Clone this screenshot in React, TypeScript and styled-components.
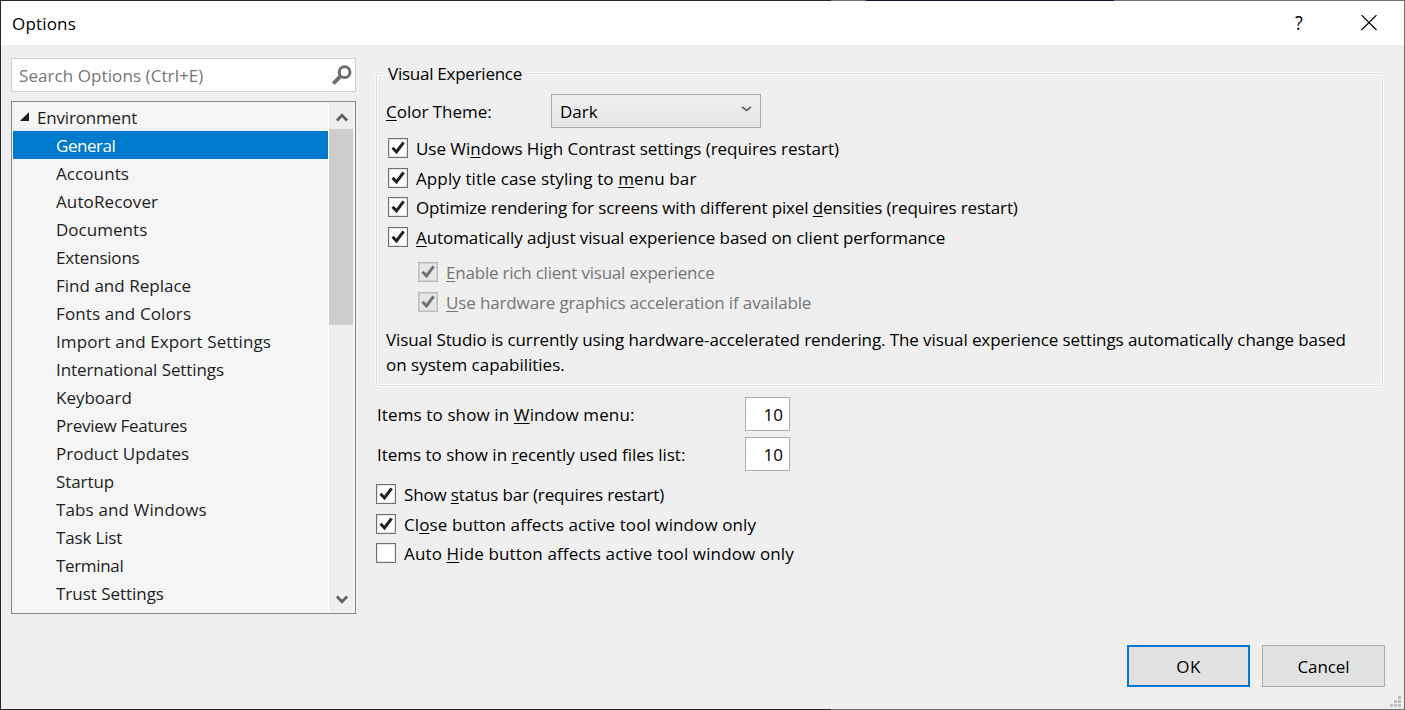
import React from "react";
import styled, { createGlobalStyle, css } from "styled-components";

const GlobalStyle = createGlobalStyle`
  *, *::before, *::after { box-sizing: border-box; }
  body {
    margin: 0;
    font-family: "Open Sans", "Segoe UI", sans-serif;
    font-size: 17px;
    line-height: 20px;
    color: #000;
  }
  svg { display: block; }
`;

const Frame = styled.div`
  width: 1405px;
  height: 710px;
  padding: 1px;
  background:
    linear-gradient(90deg, #2a2224 831px, #6f6d6e 831px 866px, #14123a 866px 1114px, #6f6d6e 1114px) top / 100% 1px no-repeat,
    linear-gradient(90deg, #2a2628 831px, #6f6d6e 831px) bottom / 100% 1px no-repeat,
    linear-gradient(90deg, #2a2426 50%, #6b6b6b 50%);
`;

const Dialog = styled.div`
  display: flex;
  flex-direction: column;
  height: 708px;
  background: #efefef;
`;

const TitleBar = styled.header`
  display: flex;
  align-items: center;
  height: 44px;
  padding: 0 27px 0 11px;
  background: #fff;
`;

const Caption = styled.div`
  flex: 1;
  padding-top: 2px;
`;

const HelpMark = styled.span`
  width: 12px;
  margin-right: 56px;
  font-size: 20px;
  text-align: center;
  transform: scaleX(0.9);
`;

const Main = styled.main`
  display: flex;
  height: 587px;
  padding: 13px 20px 0 10px;
`;

const Sidebar = styled.aside`
  width: 345px;
  margin-right: 19px;
`;

const SearchBox = styled.div`
  display: flex;
  align-items: center;
  justify-content: space-between;
  height: 34px;
  margin-bottom: 9px;
  padding: 2px 3px 0 7px;
  border: 1px solid #ccceDb;
  background: #fff;
  color: #767676;
`;

const SearchIcon = styled.svg`
  margin-bottom: 2px;
`;

const Tree = styled.div`
  display: flex;
  height: 513px;
  padding: 1px;
  border: 1px solid #828790;
  background: #f5f5f5;
`;

const TreeItems = styled.div`
  width: 315px;
`;

const TreeRow = styled.div<{ $root?: boolean; $selected?: boolean }>`
  display: flex;
  align-items: center;
  gap: 8px;
  height: 28px;
  padding-top: 1px;
  padding-left: ${(p) => (p.$root ? 7 : 43)}px;
  background: ${(p) => (p.$selected ? "#007acc" : "transparent")};
  color: ${(p) => (p.$selected ? "#fff" : "#1e1e1e")};

  svg { margin-bottom: 2px; }
`;

const ScrollBar = styled.div`
  display: flex;
  flex-direction: column;
  width: 25px;
  border-left: 1px solid #fff;
  background: #efefef;
`;

const ScrollButton = styled.div`
  display: flex;
  align-items: center;
  justify-content: center;
  height: 26px;
  padding: 3px 0 0 1px;

  &:last-child { padding-top: 1px; }
`;

const ScrollThumb = styled.div`
  height: 196px;
  margin-bottom: auto;
  background: #cdcdcd;
`;

const Page = styled.section`
  width: 1009px;
`;

const Group = styled.fieldset`
  height: 325px;
  margin: 4px 0 0;
  padding: 0 0 0 8px;
  min-width: 0;
  border: 0;
  position: relative;

  &::before {
    content: "";
    position: absolute;
    inset: 11px 1px 1px 1px;
    border: 1px solid #d3dde4;
    border-radius: 4px;
    box-shadow: 0 0 0 1px #fcfcfc, inset 0 0 0 1px #ffffff;
    pointer-events: none;
  }
`;

const GroupTitle = styled.div`
  position: relative;
  width: 142px;
  height: 24px;
  padding-left: 3px;
  margin-left: 2px;
  line-height: 24px;
  background: #efefef;
`;

const ThemeRow = styled.div`
  display: flex;
  align-items: center;
  height: 34px;
  margin: 8px 0 10px;
  padding-left: 3px;
`;

const FieldName = styled.div<{ $width: number }>`
  width: ${(p) => p.$width}px;
  padding-top: 2px;
`;

const Select = styled.div`
  display: flex;
  justify-content: space-between;
  align-items: center;
  width: 210px;
  height: 34px;
  padding: 2px 8px 0;
  border: 1px solid #acacac;
  background: linear-gradient(#f0f0f0, #e5e5e5);
`;

const SelectArrow = styled.svg`
  margin-bottom: 6px;
`;

const CheckList = styled.div<{ $left: number; $top?: number }>`
  display: flex;
  flex-direction: column;
  gap: 9.67px;
  margin-top: ${(p) => p.$top ?? 0}px;
  padding-left: ${(p) => p.$left}px;
`;

const CheckRow = styled.div<{ $disabled?: boolean }>`
  display: flex;
  gap: 8px;
  height: 20px;
  line-height: 22px;
  color: ${(p) => (p.$disabled ? "#767676" : "#000")};
`;

const Box = styled.span<{ $disabled?: boolean }>`
  width: 20px;
  height: 20px;
  border: 1px solid #707070;
  background: #fff;
  box-shadow: inset 0 0 0 1px rgba(112, 112, 112, 0.18);
  ${(p) =>
    p.$disabled &&
    css`
      border-color: #bcbcbc;
      background: #e6e6e6;
    `}
`;

const Note = styled.div`
  margin-top: 15px;
  padding-left: 3px;
  line-height: 25px;
`;

const NumberRow = styled.div`
  display: flex;
  align-items: center;
  height: 34px;
  margin-bottom: 6px;
  padding-left: 2px;
`;

const Numbers = styled.div`
  display: flow-root;
  padding-top: 10px;
`;

const NumberBox = styled.div`
  width: 45px;
  height: 34px;
  padding-right: 6px;
  border: 1px solid #abadb3;
  background: #fff;
  line-height: 34px;
  text-align: right;
`;

const Footer = styled.footer`
  display: flex;
  height: 77px;
  padding: 13px 6px 0 0;
  justify-content: flex-end;
  gap: 12px;
`;

const Button = styled.button<{ $primary?: boolean }>`
  width: 123px;
  height: 42px;
  padding: 2px 0 0;
  border: ${(p) => (p.$primary ? "2px solid #0078d7" : "1px solid #adadad")};
  background: #e1e1e1;
  color: #000;
  font: inherit;
`;

const Grip = styled.svg`
  align-self: flex-end;
  margin: 0 -3px 2px -7px;
`;

const Run = styled.span<{ $track: number }>`
  display: block;
  white-space: nowrap;
  letter-spacing: ${(p) => p.$track}px;
`;

const AccessKey = styled.span`
  text-decoration: underline;
  text-decoration-thickness: 1px;
  text-underline-offset: 2px;
  text-decoration-skip-ink: none;
`;

/* An underscore in the text marks the access key that follows it. */
function Text({ t, track = 0 }: { t: string; track?: number }) {
  const at = t.indexOf("_");
  if (at < 0) return <Run $track={track}>{t}</Run>;
  return (
    <Run $track={track}>
      {t.slice(0, at)}
      <AccessKey>{t[at + 1]}</AccessKey>
      {t.slice(at + 2)}
    </Run>
  );
}

function Check({ t, track, off, disabled }: { t: string; track: number; off?: boolean; disabled?: boolean }) {
  return (
    <CheckRow $disabled={disabled}>
      <Box $disabled={disabled}>
        {!off && (
          <svg width="18" height="18" viewBox="1 1 18 18" fill="none">
            <path d="M4.5 9.8 8.5 14 15.6 4.4" stroke={disabled ? "#707070" : "#212121"} strokeWidth="3" />
          </svg>
        )}
      </Box>
      <Text t={t} track={track} />
    </CheckRow>
  );
}

const treeItems: [string, number][] = [
  ["General", -0.45],
  ["Accounts", 0.09],
  ["AutoRecover", 0.12],
  ["Documents", 0.03],
  ["Extensions", -0.2],
  ["Find and Replace", 0.02],
  ["Fonts and Colors", 0.12],
  ["Import and Export Settings", 0.09],
  ["International Settings", -0.08],
  ["Keyboard", 0],
  ["Preview Features", -0.27],
  ["Product Updates", 0],
  ["Startup", -0.08],
  ["Tabs and Windows", 0.13],
  ["Task List", -0.15],
  ["Terminal", -0.33],
  ["Trust Settings", -0.03],
];

export default function App() {
  return (
    <Frame>
      <GlobalStyle />
      <Dialog>
        <TitleBar>
          <Caption>
            <Text t="Options" track={0.18} />
          </Caption>
          <HelpMark>?</HelpMark>
          <svg width="16" height="16" viewBox="0 0 16 16">
            <path d="M.5 0 15.5 15M15.5 0 .5 15" stroke="#000" strokeWidth="1.1" />
          </svg>
        </TitleBar>
        <Main>
          <Sidebar>
            <SearchBox>
              <Text t="Search Options (Ctrl+E)" track={0.08} />
              <SearchIcon width="21" height="21" viewBox="0 0 21 21" fill="none" stroke="#6d6d6d">
                <circle cx="13.6" cy="7.2" r="5.4" strokeWidth="3" />
                <path d="M9.6 11.2 2.2 18.6" strokeWidth="3.8" />
              </SearchIcon>
            </SearchBox>
            <Tree>
              <TreeItems>
                <TreeRow $root>
                  <svg width="9" height="9" viewBox="0 0 9 9">
                    <path d="M9 0V9H0Z" fill="#1e1e1e" />
                  </svg>
                  <Text t="Environment" track={-0.18} />
                </TreeRow>
                {treeItems.map(([name, track], i) => (
                  <TreeRow key={name} $selected={i === 0}>
                    <Text t={name} track={track} />
                  </TreeRow>
                ))}
              </TreeItems>
              <ScrollBar>
                <ScrollButton>
                  <svg width="12" height="9" viewBox="0 0 12 9" fill="none">
                    <path d="M.9 7.6 6 2.2 11.1 7.6" stroke="#606060" strokeWidth="2.8" />
                  </svg>
                </ScrollButton>
                <ScrollThumb />
                <ScrollButton>
                  <svg width="12" height="9" viewBox="0 0 12 9" fill="none">
                    <path d="M.9 1.4 6 6.8 11.1 1.4" stroke="#606060" strokeWidth="2.8" />
                  </svg>
                </ScrollButton>
              </ScrollBar>
            </Tree>
          </Sidebar>
          <Page>
            <Group>
              <GroupTitle>
                <Text t="Visual Experience" track={-0.25} />
              </GroupTitle>
              <ThemeRow>
                <FieldName $width={165}>
                  <Text t="_Color Theme:" track={-0.02} />
                </FieldName>
                <Select>
                  <Text t="Dark" track={0} />
                  <SelectArrow width="11" height="6" viewBox="0 0 11 6" fill="none">
                    <path d="M1 .9 5.5 4.4 10 .9" stroke="#606060" strokeWidth="1.8" />
                  </SelectArrow>
                </Select>
              </ThemeRow>
              <CheckList $left={5}>
                <Check t="Use Wi_ndows High Contrast settings (requires restart)" track={-0.03} />
                <Check t="Apply title case styling to _menu bar" track={0.11} />
                <Check t="Optimize rendering for screens with different pixel _densities (requires restart)" track={-0.14} />
                <Check t="_Automatically adjust visual experience based on client performance" track={-0.073} />
              </CheckList>
              <CheckList $left={35} $top={15}>
                <Check t="_Enable rich client visual experience" track={-0.21} disabled />
                <Check t="_Use hardware graphics acceleration if available" track={-0.135} disabled />
              </CheckList>
              <Note>
                <Text
                  t="Visual Studio is currently using hardware-accelerated rendering. The visual experience settings automatically change based"
                  track={-0.097}
                />
                <Text t="on system capabilities." track={0} />
              </Note>
            </Group>
            <Numbers>
              <NumberRow>
                <FieldName $width={368}>
                  <Text t="Items to show in _Window menu:" track={0.12} />
                </FieldName>
                <NumberBox>10</NumberBox>
              </NumberRow>
              <NumberRow>
                <FieldName $width={368}>
                  <Text t="Items to show in _recently used files list:" track={-0.02} />
                </FieldName>
                <NumberBox>10</NumberBox>
              </NumberRow>
            </Numbers>
            <CheckList $left={1} $top={7}>
              <Check t="Show _status bar (requires restart)" track={-0.15} />
              <Check t="Cl_ose button affects active tool window only" track={0.1} />
              <Check t="Auto _Hide button affects active tool window only" track={0.135} off />
            </CheckList>
          </Page>
        </Main>
        <Footer>
          <Button $primary>
            <Text t="OK" track={0.4} />
          </Button>
          <Button>
            <Text t="Cancel" track={-0.1} />
          </Button>
          <Grip width="11" height="11" viewBox="0 0 11 11" fill="#bfbfbf">
            <path d="M8 0h3v3H8zM4 4h3v3H4zM8 4h3v3H8zM0 8h3v3H0zM4 8h3v3H4zM8 8h3v3H8z" />
          </Grip>
        </Footer>
      </Dialog>
    </Frame>
  );
}
